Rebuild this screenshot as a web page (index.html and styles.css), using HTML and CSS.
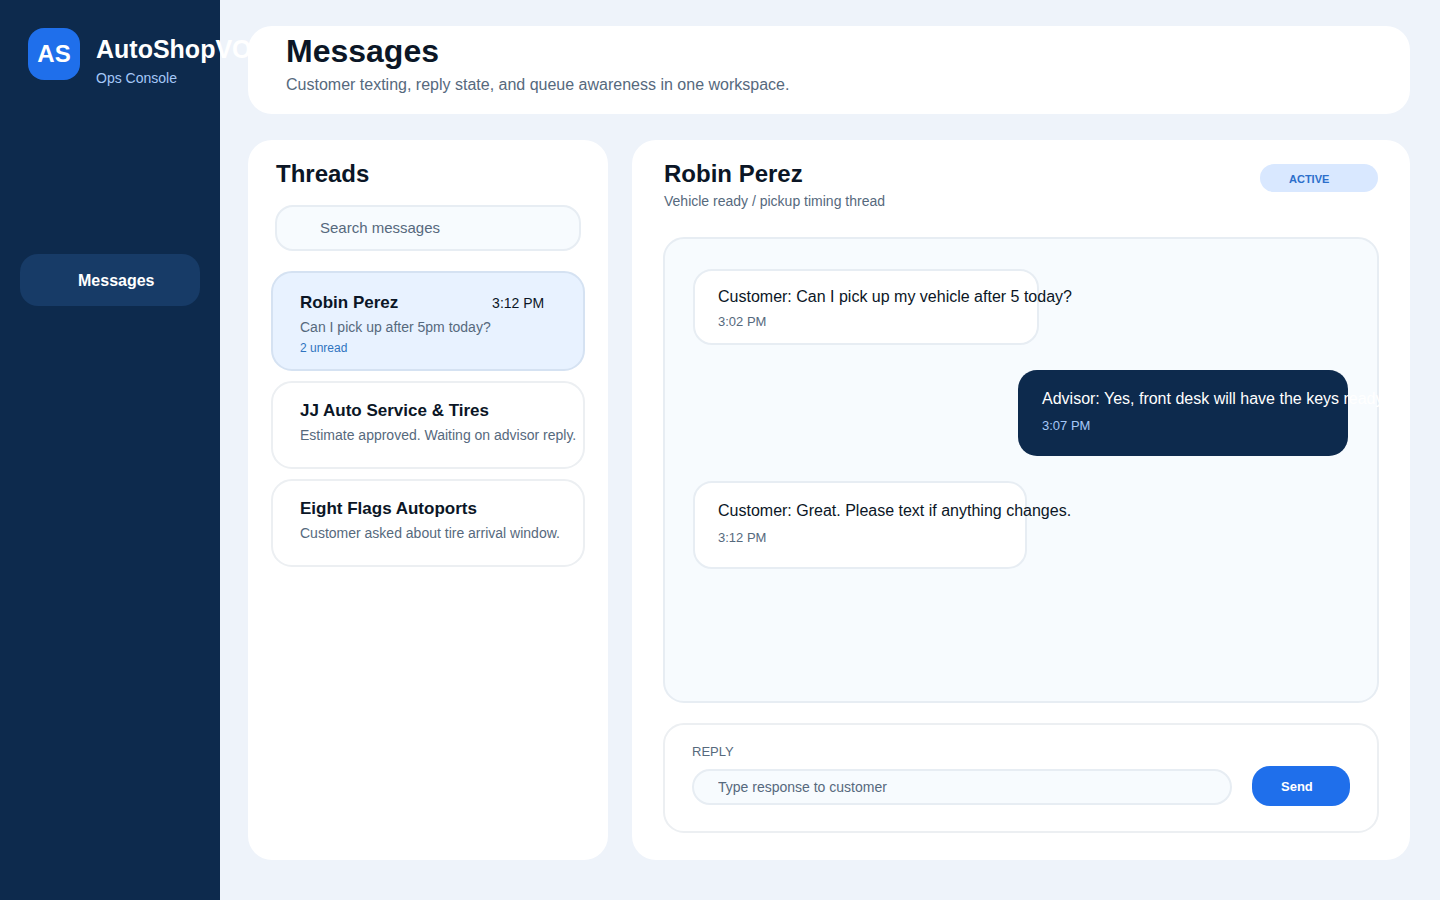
FILE: index.html
```html
<!DOCTYPE html>
<html lang="en">
	<head>
		<meta charset="utf-8" />
		<title>Messages</title>

		<meta name="viewport" content="width=device-width, initial-scale=1" />

		<link rel="stylesheet" href="styles.css">
	</head>
	<body>
		<aside class="sidebar">
			<div class="brand">
				<div class="logo">AS</div>
				<div class="brand-text">
					<div class="brand-name">AutoShopVO</div>
					<div class="brand-sub">Ops Console</div>
				</div>
			</div>
			<nav>
				<a class="nav-link" href="#messages">Messages</a>
			</nav>
		</aside>

		<main id="messages">
			<header class="page-header">
				<h1>Messages</h1>
				<p>Customer texting, reply state, and queue awareness in one workspace.</p>
			</header>

			<div class="workspace">
				<section class="panel threads">
					<h2>Threads</h2>
					<input class="search" type="search" placeholder="Search messages" aria-label="Search messages">

					<div class="thread-list">
						<article class="thread active">
							<div class="thread-head">
								<h3>Robin Perez</h3>
								<time>3:12 PM</time>
							</div>
							<p class="preview">Can I pick up after 5pm today?</p>
							<p class="unread">2 unread</p>
						</article>
						<article class="thread">
							<h3>JJ Auto Service &amp; Tires</h3>
							<p class="preview">Estimate approved. Waiting on advisor reply.</p>
						</article>
						<article class="thread">
							<h3>Eight Flags Autoports</h3>
							<p class="preview">Customer asked about tire arrival window.</p>
						</article>
					</div>
				</section>

				<section class="panel conversation">
					<div class="conversation-head">
						<div>
							<h2>Robin Perez</h2>
							<p class="topic">Vehicle ready / pickup timing thread</p>
						</div>
						<span class="status">ACTIVE</span>
					</div>

					<div class="chat">
						<div class="bubble short">
							<p>Customer: Can I pick up my vehicle after 5 today?</p>
							<time>3:02 PM</time>
						</div>
						<div class="bubble advisor">
							<p>Advisor: Yes, front desk will have the keys ready.</p>
							<time>3:07 PM</time>
						</div>
						<div class="bubble">
							<p>Customer: Great. Please text if anything changes.</p>
							<time>3:12 PM</time>
						</div>
					</div>

					<form class="reply">
						<label for="reply-text">REPLY</label>
						<div class="reply-row">
							<input id="reply-text" type="text" placeholder="Type response to customer">
							<button type="button">Send</button>
						</div>
					</form>
				</section>
			</div>
		</main>
	</body>
</html>
```

FILE: styles.css
```css
* { box-sizing: border-box; }

:root {
	--navy: #0d2a4d;
	--blue: #1f6feb;
	--ink: #0b1626;
	--muted: #56697d;
	--line: #e7edf3;
	--soft: #f7fbfe;
}

body {
	display: flex;
	min-height: 100vh;
	margin: 0;
	background: #eef3fa;
	color: var(--ink);
	font: 16px/20px "Liberation Sans", Arial, sans-serif;
}

h1, h2, h3, p { margin: 0; }

input,
button { font-family: inherit; }

input::placeholder {
	color: var(--muted);
	opacity: 1;
}

/* sidebar */
.sidebar {
	flex: 0 0 220px;
	min-width: 0;
	padding: 28px 20px;
	background: var(--navy);
	color: #fff;
}

.brand {
	display: flex;
	gap: 16px;
	height: 60px;
	margin: 0 8px 166px;
}

.logo {
	flex: none;
	width: 52px;
	height: 52px;
	border-radius: 16px;
	background: var(--blue);
	font-size: 24px;
	font-weight: bold;
	line-height: 52px;
	text-align: center;
}

.brand-text {
	padding-top: 6px;
	white-space: nowrap;
}

.brand-name {
	font-size: 25px;
	font-weight: bold;
	line-height: 30px;
}

.brand-sub {
	margin-top: 5px;
	color: #a5c8f8;
	font-size: 14px;
	line-height: 18px;
}

.nav-link {
	display: block;
	padding: 17px 58px 15px;
	border-radius: 18px;
	background: #173b67;
	color: #fff;
	font-weight: bold;
	text-decoration: none;
}

/* main area */
main {
	display: flex;
	flex: 1;
	flex-direction: column;
	gap: 26px;
	min-width: 0;
	padding: 26px 30px 40px 28px;
}

.page-header {
	padding: 7px 38px 19px;
	border-radius: 24px;
	background: #fff;
}

.page-header h1 {
	font-size: 32px;
	line-height: 36px;
}

.page-header p {
	margin-top: 6px;
	color: var(--muted);
}

.workspace {
	display: grid;
	flex: 1;
	grid-template-columns: 360px 1fr;
	gap: 24px;
}

.panel {
	border-radius: 24px;
	background: #fff;
}

.panel h2 {
	font-size: 24px;
	line-height: 28px;
}

/* thread list */
.threads { padding: 20px 23px; }

.threads h2 { padding-left: 5px; }

.search {
	display: block;
	width: calc(100% - 8px);
	height: 46px;
	margin: 17px 4px 20px;
	padding: 0 43px 2px;
	border: 2px solid var(--line);
	border-radius: 18px;
	background: var(--soft);
	font-size: 15px;
	-webkit-appearance: none;
	appearance: none;
}

.thread-list {
	display: grid;
	gap: 10px;
}

.thread {
	min-height: 88px;
	padding: 18px 7px 16px 27px;
	border: 2px solid #eceff2;
	border-radius: 21px;
}

.thread.active {
	min-height: 100px;
	padding-top: 20px;
	padding-bottom: 12px;
	border-color: #d5e2f2;
	background: #e8f2ff;
}

.thread-head {
	display: flex;
	justify-content: space-between;
	padding-right: 32px;
}

.thread-head time {
	font-size: 14px;
}

.thread h3 {
	font-size: 17px;
	line-height: 20px;
}

.preview {
	margin-top: 5px;
	color: var(--muted);
	font-size: 14px;
	line-height: 18px;
	white-space: nowrap;
}

.unread {
	margin-top: 5px;
	color: #2f74c0;
	font-size: 12px;
	line-height: 14px;
}

/* conversation */
.conversation {
	display: flex;
	flex-direction: column;
	min-width: 0;
	padding: 20px 31px 27px;
}

.conversation-head {
	display: flex;
	align-items: flex-start;
	justify-content: space-between;
	padding: 0 1px 27px;
}

.topic {
	margin-top: 4px;
	color: var(--muted);
	font-size: 14px;
	line-height: 18px;
}

.status {
	width: 118px;
	height: 28px;
	margin-top: 4px;
	padding-left: 29px;
	border-radius: 14px;
	background: #d9e8ff;
	color: #2c6fcb;
	font-size: 11px;
	font-weight: bold;
	line-height: 30px;
}

.chat {
	display: flex;
	flex: 1;
	flex-direction: column;
	align-items: flex-start;
	gap: 25px;
	margin-bottom: 20px;
	padding: 30px 29px 30px 28px;
	border: 2px solid var(--line);
	border-radius: 21px;
	background: var(--soft);
}

.bubble {
	width: 334px;
	min-height: 88px;
	padding: 18px 23px;
	border: 2px solid var(--line);
	border-radius: 19px;
	background: #fff;
	white-space: nowrap;
}

.bubble.short {
	width: 346px;
	min-height: 76px;
	padding: 16px 23px 13px;
}

.bubble time {
	display: block;
	margin-top: 9px;
	color: var(--muted);
	font-size: 13px;
	line-height: 16px;
}

.bubble.short time { margin-top: 7px; }

.bubble.advisor {
	align-self: flex-end;
	width: 330px;
	min-height: 86px;
	padding: 19px 24px;
	border: 0;
	background: var(--navy);
	color: #fff;
}

.bubble.advisor time { color: #a5c8f8; }

/* reply box */
.reply {
	padding: 19px 27px 25px;
	border: 2px solid #eceff2;
	border-radius: 21px;
}

.reply label {
	display: block;
	margin-bottom: 6px;
	color: var(--muted);
	font-size: 13px;
	line-height: 16px;
}

.reply-row {
	display: flex;
	align-items: flex-end;
	gap: 20px;
}

.reply-row input {
	flex: 1;
	min-width: 0;
	height: 36px;
	margin-bottom: 1px;
	padding: 0 24px;
	border: 2px solid var(--line);
	border-radius: 18px;
	background: var(--soft);
	font-size: 14px;
}

.reply-row button {
	width: 98px;
	height: 40px;
	padding: 0 29px;
	border: 0;
	border-radius: 18px;
	background: var(--blue);
	color: #fff;
	font-size: 13px;
	font-weight: bold;
	text-align: left;
}
```
